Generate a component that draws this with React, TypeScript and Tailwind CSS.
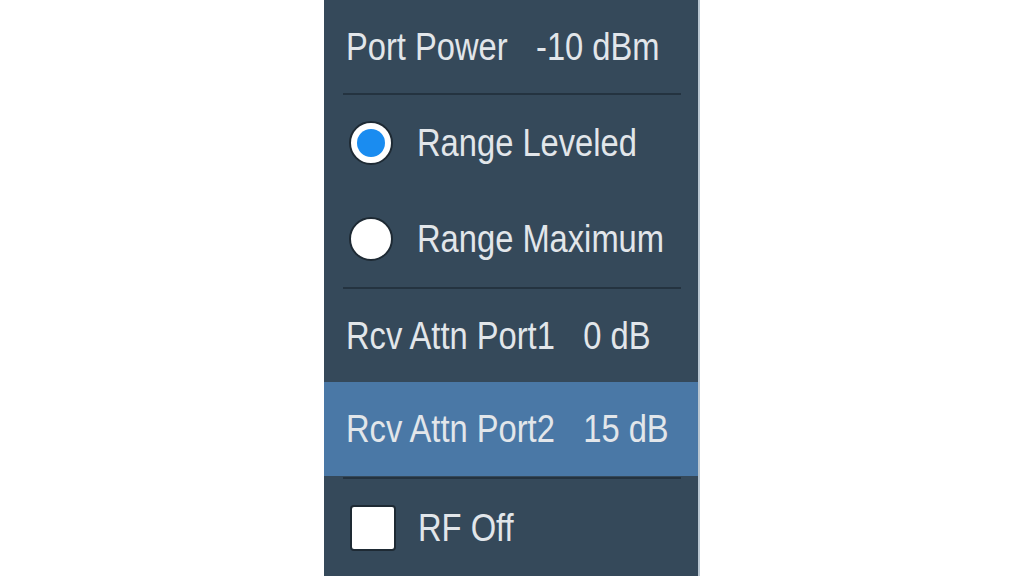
import React from "react";

const font = { fontFamily: '"Liberation Sans", Arial, sans-serif' };

function Label({ children }: { children: React.ReactNode }) {
  return (
    <div className="flex items-center origin-left scale-x-[0.86] text-[38px] leading-none text-[#e2e6ea] whitespace-nowrap">
      {children}
    </div>
  );
}

function Divider() {
  return <div className="ml-[19px] mr-[17px] h-[2px] bg-[#243340] shrink-0" />;
}

function Radio({ checked }: { checked: boolean }) {
  return (
    <div className="w-[44px] h-[44px] rounded-full border-2 border-[#1e2a34] bg-white flex items-center justify-center shrink-0">
      {checked && <div className="w-[28px] h-[28px] rounded-full bg-[#1a8cf0]" />}
    </div>
  );
}

export default function App() {
  return (
    <div className="w-[1024px] h-[576px] bg-white flex overflow-hidden" style={font}>
      <div className="ml-[324px] w-[376px] h-full bg-[#35495a] flex flex-col border-r-2 border-[#b9c6d1]">
        <div className="h-[93px] flex items-center pl-[22px] shrink-0">
          <Label>
            <span>Port Power</span>
            <span className="ml-[33px]">-10 dBm</span>
          </Label>
        </div>
        <Divider />
        <div className="h-[96px] flex items-center pl-[25px] gap-[24px] shrink-0">
          <Radio checked />
          <Label>Range Leveled</Label>
        </div>
        <div className="h-[96px] flex items-center pl-[25px] gap-[24px] shrink-0">
          <Radio checked={false} />
          <Label>Range Maximum</Label>
        </div>
        <Divider />
        <div className="h-[93px] flex items-center pl-[22px] shrink-0">
          <Label>
            <span>Rcv Attn Port1</span>
            <span className="ml-[33px]">0 dB</span>
          </Label>
        </div>
        <div className="h-[94px] flex items-center pl-[22px] bg-[#4a78a6] shrink-0">
          <Label>
            <span>Rcv Attn Port2</span>
            <span className="ml-[33px]">15 dB</span>
          </Label>
        </div>
        <div className="h-[1px] shrink-0" />
        <Divider />
        <div className="flex-1 flex items-center pl-[26px] gap-[22px]">
          <div className="w-[46px] h-[46px] rounded-[4px] border-2 border-[#1e2a34] bg-white shrink-0" />
          <Label>RF Off</Label>
        </div>
      </div>
    </div>
  );
}
